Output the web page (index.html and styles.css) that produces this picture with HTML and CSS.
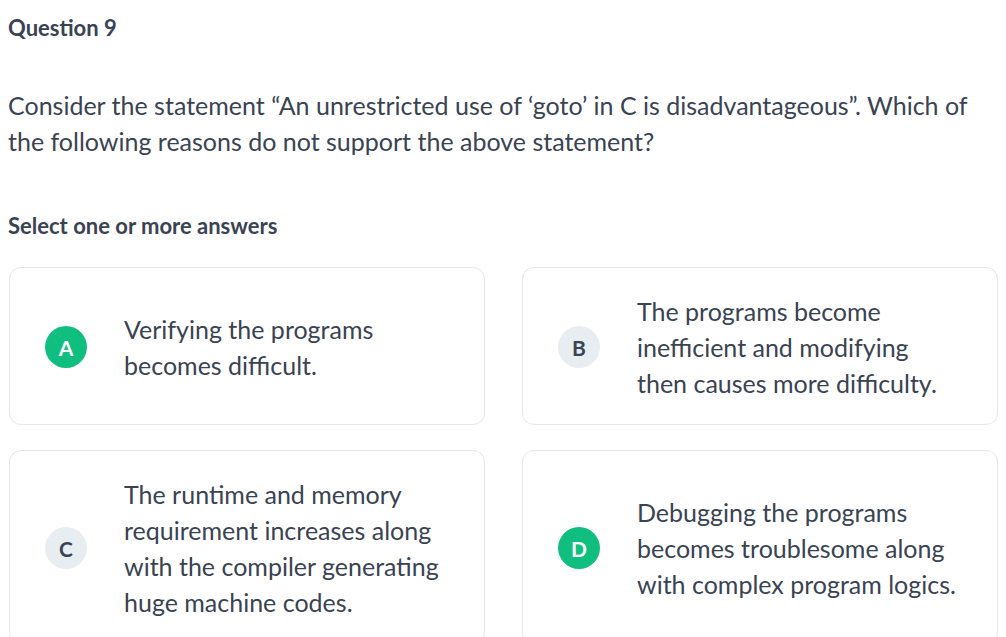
FILE: index.html
```html
<!DOCTYPE html>
<html lang="en">
<head>
<meta charset="utf-8">
<title>Question 9</title>
<link rel="stylesheet" href="styles.css">
</head>
<body>
<main class="page">
  <h2 class="q-title">Question 9</h2>
  <p class="q-text">Consider the statement “An unrestricted use of ‘goto’ in C is disadvantageous”. Which of the following reasons do not support the above statement?</p>
  <h3 class="q-hint">Select one or more answers</h3>
  <div class="options">
    <div class="option">
      <span class="badge badge-selected">A</span>
      <span class="opt-text">Verifying the programs becomes difficult.</span>
    </div>
    <div class="option">
      <span class="badge">B</span>
      <span class="opt-text">The programs become inefficient and modifying then causes more difficulty.</span>
    </div>
    <div class="option">
      <span class="badge">C</span>
      <span class="opt-text">The runtime and memory requirement increases along with the compiler generating huge machine codes.</span>
    </div>
    <div class="option">
      <span class="badge badge-selected">D</span>
      <span class="opt-text">Debugging the programs becomes troublesome along with complex program logics.</span>
    </div>
  </div>
</main>
</body>
</html>
```

FILE: styles.css
```css
* { box-sizing: border-box; }
html, body { margin: 0; padding: 0; background: #ffffff; }
body {
  font-family: Lato, "Open Sans", sans-serif;
  color: #3a4352;
}
.page {
  padding: 0 8px 0 9px;
}
.q-title {
  margin: 14px 0 0 -1px;
  font-size: 22px;
  line-height: 28px;
  font-weight: 700;
}
.q-text {
  margin: 45px 0 0 -1px;
  font-size: 25px;
  line-height: 36px;
  font-weight: 400;
}
.q-hint {
  margin: 53px 0 0 -1px;
  font-size: 22px;
  line-height: 28px;
  font-weight: 700;
}
.options {
  margin-top: 27px;
  display: grid;
  grid-template-columns: 1fr 1fr;
  column-gap: 37px;
  row-gap: 25px;
}
.option {
  display: flex;
  align-items: center;
  border: 1px solid #e4e8ed;
  border-radius: 12px;
  padding: 25px 30px 23px 35px;
  min-height: 158px;
}
.badge {
  flex: 0 0 42px;
  width: 42px;
  height: 42px;
  border-radius: 50%;
  background: #e8edf2;
  color: #3a4352;
  display: flex;
  align-items: center;
  justify-content: center;
  font-size: 21px;
  font-weight: 700;
}
.badge-selected {
  background: #10bf80;
  color: #ffffff;
}
.opt-text {
  margin-left: 37px;
  font-size: 25px;
  line-height: 36px;
  max-width: 323px;
}
```
